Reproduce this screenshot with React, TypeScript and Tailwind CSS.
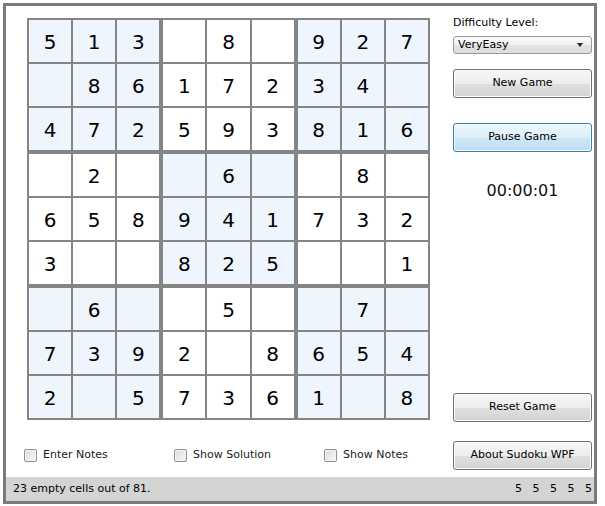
import React from "react";

const board = [
  "513 8 927",
  " 8617234 ",
  "472593816",
  " 2  6  8 ",
  "658941732",
  "3  825  1",
  " 6  5  7 ",
  "7392 8654",
  "2 57361 8",
];

const font = { fontFamily: '"DejaVu Sans", Verdana, sans-serif' };

const btn =
  "h-[29px] w-full rounded-[3px] border border-[#707070] bg-[linear-gradient(to_bottom,#f6f6f6_0%,#ededed_50%,#e0e0e0_50%,#d3d3d3_100%)] text-[11px] text-black shadow-[inset_0_0_0_1px_#fcfcfc]";

function Box({ br, bc }: { br: number; bc: number }) {
  const blue = (br + bc) % 2 === 0;
  const cells = [];
  for (let r = 0; r < 3; r++) {
    for (let c = 0; c < 3; c++) {
      const v = board[br * 3 + r][bc * 3 + c];
      cells.push(
        <div
          key={`${r}-${c}`}
          className={`flex items-center justify-center pt-[2px] text-[20px] text-black ${
            blue ? "bg-[#eef5fd]" : "bg-white"
          }`}
        >
          {v && v !== " " ? v : ""}
        </div>
      );
    }
  }
  return <div className="grid grid-cols-3 grid-rows-3 gap-[2px]">{cells}</div>;
}

function Check({ label }: { label: string }) {
  return (
    <label className="flex items-center gap-[6px] text-[11px] text-[#1a1a1a]">
      <span className="h-[13px] w-[13px] rounded-[2px] border border-[#8e8f8f] bg-[linear-gradient(135deg,#dcdcdc_0%,#f8f8f8_100%)] shadow-[inset_0_0_0_1px_#f4f4f4]" />
      {label}
    </label>
  );
}

export default function App() {
  return (
    <div className="h-[506px] w-[605px] bg-white p-[3px]" style={font}>
      <div className="flex h-[501px] w-[594px] flex-col border-[3px] border-[#7b7b7b] bg-white">
        <div className="flex flex-1">
          {/* board + options */}
          <div className="flex flex-col pl-[21px] pt-[12px]">
            <div className="grid h-[402px] w-[403px] grid-cols-3 grid-rows-3 gap-[4px] bg-[#858585] p-[2px]">
              {[0, 1, 2].map((br) =>
                [0, 1, 2].map((bc) => <Box key={`${br}${bc}`} br={br} bc={bc} />)
              )}
            </div>
            <div className="mt-[27px] flex">
              <div className="-ml-[3px] w-[150px]">
                <Check label="Enter Notes" />
              </div>
              <div className="w-[150px]">
                <Check label="Show Solution" />
              </div>
              <Check label="Show Notes" />
            </div>
          </div>

          {/* side panel */}
          <div className="ml-[23px] flex w-[139px] flex-col pb-[7px] pt-[10px]">
            <div className="text-[11px] leading-[13px] text-black">Difficulty Level:</div>
            <div className="mt-[7px] flex h-[18px] items-center justify-between rounded-[3px] border border-[#9a9a9a] bg-[linear-gradient(to_bottom,#fbfbfb_0%,#f0f0f0_50%,#e4e4e4_50%,#dcdcdc_100%)] pl-[4px] pr-[8px] text-[11px]">
              <span>VeryEasy</span>
              <span className="h-0 w-0 border-x-[3.5px] border-t-[4px] border-x-transparent border-t-[#222]" />
            </div>
            <button className={`mt-[15px] ${btn}`}>New Game</button>
            <button className="mt-[25px] h-[29px] w-full rounded-[3px] border border-[#3c7fb1] bg-[linear-gradient(to_bottom,#eef7fd_0%,#dceefa_50%,#cde7f6_50%,#bfdff1_100%)] text-[11px] text-black shadow-[inset_0_0_0_1px_#f4fafd]">
              Pause Game
            </button>
            <div className="mt-[27px] text-center text-[16px] text-[#111]">00:00:01</div>
            <button className={`mt-auto ${btn}`}>Reset Game</button>
            <button className={`mt-[19px] ${btn}`}>About Sudoku WPF</button>
          </div>
        </div>

        {/* status bar */}
        <div className="flex h-[24px] items-center justify-between bg-[#d4d4d4] pl-[7px] pr-[2px] text-[11px] text-black">
          <span>23 empty cells out of 81.</span>
          <div className="flex gap-[10.5px]">
            {[5, 5, 5, 5, 5].map((n, i) => (
              <span key={i}>{n}</span>
            ))}
          </div>
        </div>
      </div>
    </div>
  );
}
